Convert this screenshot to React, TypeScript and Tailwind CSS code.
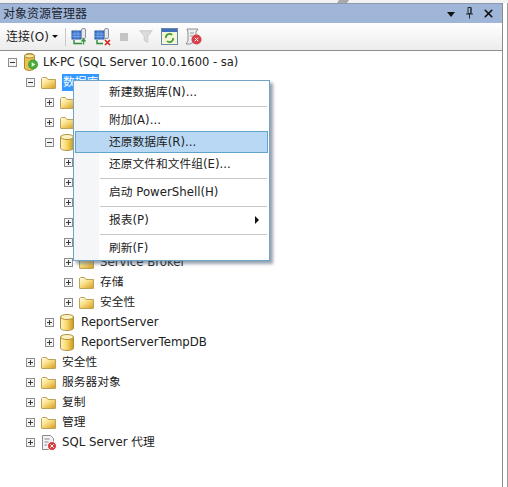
import { X } from "lucide-react";

const FONT = "font-['DejaVu_Sans','Noto_Sans_CJK_SC',sans-serif]";

function Expander({ open }: { open?: boolean }) {
  return (
    <svg width="9" height="9" viewBox="0 0 9 9" className="shrink-0">
      <rect x="0.5" y="0.5" width="8" height="8" fill="#f4f4f4" stroke="#8d8d8d" />
      <path d={open ? "M2 4.5h5" : "M2 4.5h5M4.5 2v5"} stroke="#3a3a3a" />
    </svg>
  );
}

function Folder() {
  return (
    <svg width="15" height="13" viewBox="0 0 15 13" className="shrink-0">
      <defs>
        <linearGradient id="fold" x1="0" y1="0" x2="0.8" y2="1">
          <stop offset="0" stopColor="#fffdf0" />
          <stop offset="0.45" stopColor="#fbe48e" />
          <stop offset="1" stopColor="#dca52e" />
        </linearGradient>
      </defs>
      <path d="M0.5 2.5V12a.5.5 0 0 0 .5.5h13a.5.5 0 0 0 .5-.5V3.5H7L5.5 1.5H1.5z" fill="url(#fold)" stroke="#bda257" />
    </svg>
  );
}

function Db() {
  return (
    <svg width="14" height="17" viewBox="0 0 14 17" className="shrink-0">
      <defs>
        <linearGradient id="dbg" x1="0" y1="0" x2="1" y2="0">
          <stop offset="0" stopColor="#fff6c8" />
          <stop offset="0.5" stopColor="#f8d668" />
          <stop offset="1" stopColor="#c8981f" />
        </linearGradient>
      </defs>
      <path d="M0.5 3v11c0 1.4 2.9 2.5 6.5 2.5s6.5-1.1 6.5-2.5V3z" fill="url(#dbg)" stroke="#b08e3a" />
      <ellipse cx="7" cy="3" rx="6.5" ry="2.5" fill="#fdf3c0" stroke="#b08e3a" />
    </svg>
  );
}

function ServerIcon() {
  return (
    <svg width="16" height="18" viewBox="0 0 16 18" className="shrink-0">
      <path d="M1.5 3c0-1.4 2.4-2.5 5-2.5s5 1.1 5 2.5v12c0 1.4-2.4 2.5-5 2.5s-5-1.1-5-2.5z" fill="#eac04f" stroke="#a98a35" />
      <ellipse cx="6.5" cy="3" rx="5" ry="2" fill="#f8e7a0" stroke="#a98a35" />
      <circle cx="10" cy="11.5" r="5" fill="#48a83c" />
      <path d="M8.7 9l3.6 2.5-3.6 2.5z" fill="#e6f7d8" />
    </svg>
  );
}

function AgentIcon() {
  return (
    <svg width="16" height="17" viewBox="0 0 16 17" className="shrink-0">
      <path d="M1.5 1.5h8l3 3v11h-11z" fill="#f3f3f3" stroke="#8a8a8a" />
      <path d="M3.5 5h5M3.5 8h4M3.5 11h3" stroke="#7c8aa0" />
      <circle cx="11" cy="12" r="4.5" fill="#d93a3a" stroke="#fff" />
      <path d="M9.3 10.3l3.4 3.4M12.7 10.3l-3.4 3.4" stroke="#fff" />
    </svg>
  );
}

function PinIcon() {
  return (
    <svg width="9" height="13" viewBox="0 0 9 13" className="shrink-0 -mt-[2px]">
      <path d="M3 1.5h3v6H3zM6 1.5v6M1 8h7M4.5 8v4.5" fill="none" stroke="#23272e" />
    </svg>
  );
}

type Row = { exp: number; open?: boolean; icon: "folder" | "db" | "server" | "agent"; text?: string; gap?: string; selected?: boolean };

const rows: Row[] = [
  { exp: 8, open: true, icon: "server", text: "LK-PC (SQL Server 10.0.1600 - sa)", gap: "ml-[4px] text-[11.5px]" },
  { exp: 26, open: true, icon: "folder", text: "数据库", selected: true },
  { exp: 45, icon: "folder" },
  { exp: 45, icon: "folder" },
  { exp: 45, open: true, icon: "db" },
  { exp: 64, icon: "folder" },
  { exp: 64, icon: "folder" },
  { exp: 64, icon: "folder" },
  { exp: 64, icon: "folder" },
  { exp: 64, icon: "folder" },
  { exp: 64, icon: "folder", text: "Service Broker" },
  { exp: 64, icon: "folder", text: "存储" },
  { exp: 64, icon: "folder", text: "安全性" },
  { exp: 45, icon: "db", text: "ReportServer" },
  { exp: 45, icon: "db", text: "ReportServerTempDB" },
  { exp: 26, icon: "folder", text: "安全性" },
  { exp: 26, icon: "folder", text: "服务器对象" },
  { exp: 26, icon: "folder", text: "复制" },
  { exp: 26, icon: "folder", text: "管理" },
  { exp: 26, icon: "agent", text: "SQL Server 代理" },
];

function Icon({ kind }: { kind: Row["icon"] }) {
  if (kind === "folder") return <Folder />;
  if (kind === "db") return <Db />;
  if (kind === "server") return <ServerIcon />;
  return <AgentIcon />;
}

function Computer() {
  return (
    <>
      <rect x="1" y="3" width="9" height="8" fill="#3d7bd6" stroke="#2a5aa0" />
      <path d="M1 6h9M1 8.5h9M4 3v8M7 3v8" stroke="#8db4ea" strokeWidth="0.6" />
      <rect x="10.5" y="0.5" width="4" height="10" rx="1.5" fill="#e6e8ee" stroke="#8a94a4" />
    </>
  );
}

function ToolbarIcons() {
  return (
    <div className="flex items-center ml-[5px]">
      <svg width="18" height="18" viewBox="0 0 18 18">
        <Computer />
        <path d="M3 12v3.5h8" fill="none" stroke="#2f8a34" strokeWidth="1.4" />
        <path d="M12.5 16.5v-5M10.5 13.5l2-2.5 2 2.5" fill="none" stroke="#2f9e3a" strokeWidth="1.4" />
      </svg>
      <svg width="18" height="18" viewBox="0 0 18 18" className="ml-[5px]">
        <Computer />
        <path d="M3 12v3.5h6" fill="none" stroke="#2f8a34" strokeWidth="1.4" />
        <path d="M11 12l5 5M16 12l-5 5" stroke="#d8201c" strokeWidth="1.6" />
      </svg>
      <div className="w-[8px] h-[8px] bg-[#c4c4c4] ml-[8px]" />
      <svg width="16" height="16" viewBox="0 0 18 16" className="ml-[10px]">
        <path d="M2 1h14l-5 6v7l-4-2V7z" fill="#dcdcdc" stroke="#c6c6c6" />
      </svg>
      <svg width="17" height="17" viewBox="0 0 17 17" className="ml-[7px]">
        <rect x="0.5" y="0.5" width="16" height="16" fill="#f4f6d8" stroke="#6c86a8" />
        <rect x="1" y="1" width="15" height="3" fill="#3f6fb8" />
        <path d="M5 10a3.5 3.5 0 0 1 6-3M12 10a3.5 3.5 0 0 1-6 3" fill="none" stroke="#3d9a2e" strokeWidth="1.7" />
      </svg>
      <svg width="19" height="18" viewBox="0 0 19 18" className="ml-[6px]">
        <path d="M3 1h11l-2 3v9l-6 3H2l2-3V4z" fill="#eceff2" stroke="#8e8e8e" />
        <path d="M6 5h4M6 8h3" stroke="#9a9a9a" />
        <circle cx="12.5" cy="11.5" r="5" fill="#d8404a" />
        <path d="M10.8 9.8l3.4 3.4M14.2 9.8l-3.4 3.4" stroke="#fff" />
      </svg>
    </div>
  );
}

type Item = { label: string; active?: boolean; arrow?: boolean } | "sep";

const menu: Item[] = [
  { label: "新建数据库(N)..." },
  "sep",
  { label: "附加(A)..." },
  { label: "还原数据库(R)...", active: true },
  { label: "还原文件和文件组(E)..." },
  "sep",
  { label: "启动 PowerShell(H)" },
  "sep",
  { label: "报表(P)", arrow: true },
  "sep",
  { label: "刷新(F)" },
];

function ContextMenu() {
  return (
    <div className="absolute left-[73px] top-[80px] w-[197px] h-[181px] bg-white border border-[#6fa3c8] shadow-[3px_3px_3px_rgba(70,90,110,0.55)] pr-[1px] text-[11.75px] text-[#222]">
      <div className="absolute left-0 top-0 bottom-0 w-[25px] bg-[#f5f6f7]" />
      <div className="relative flex flex-col">
        {menu.map((m, i) =>
          m === "sep" ? (
            <div key={i} className="h-[6px] flex items-center pl-[26px] pr-[1px]">
              <div className="h-px w-full bg-[#c6c6c6]" />
            </div>
          ) : (
            <div
              key={i}
              className={`flex items-center justify-between h-[22px] pr-[9px] ml-[1px] ${m.active ? "bg-[#b8d8f4] border border-[#62a3cb] pl-[33px]" : "pl-[34px]"}`}
            >
              <span className="pt-[2px]">{m.label}</span>
              {m.arrow && <div className="border-y-[4px] border-y-transparent border-l-[4px] border-l-[#111]" />}
            </div>
          )
        )}
      </div>
    </div>
  );
}

export default function App() {
  return (
    <div className={`relative w-[508px] h-[487px] bg-white overflow-hidden flex flex-col ${FONT}`}>
      <div className="h-[3px] bg-[#f2f2f2] flex shrink-0">
        <div className="ml-[338px] w-[10px] h-[3px] bg-[#a8a8a8] -skew-x-[30deg]" />
      </div>
      <div className="flex flex-1">
        <div className="w-[503px] border-r border-[#8c8c8c] flex flex-col">
          <div className="h-[20px] bg-[#9fb6d8] flex items-center pl-[3px] pr-[7px] text-[12px] text-[#1c2430] border-t border-[#8c9bb0]">
            <span className="flex-1">对象资源管理器</span>
            <div className="border-x-[4px] border-x-transparent border-t-[5px] border-t-[#111] mr-[10px] mt-[2px]" />
            <PinIcon />
            <X size={13} strokeWidth={3} className="text-[#111] ml-[8px]" />
          </div>
          <div className="h-[28px] bg-gradient-to-b from-white to-[#ececec] border-b border-[#8f8f8f] flex items-center pl-[6px] text-[12px] text-[#222]">
            <span>连接(O)</span>
            <div className="border-x-[3px] border-x-transparent border-t-[3px] border-t-[#111] ml-[3px]" />
            <div className="w-px h-[18px] bg-[#c8c8c8] ml-[7px]" />
            <ToolbarIcons />
          </div>
          <div className="flex flex-col pt-[1px] text-[11.75px] text-[#222]">
            {rows.map((r, i) => (
              <div key={i} className="h-[20px] flex items-center" style={{ paddingLeft: r.exp }}>
                <Expander open={r.open} />
                <div className="ml-[6px] flex items-center w-[16px]">
                  <Icon kind={r.icon} />
                </div>
                {r.text && (
                  <span className={`${r.gap ?? "ml-[5px]"} ${r.selected ? "bg-[#3399ff] text-white px-[1px] h-[17px] leading-[17px]" : "pt-[2px]"} whitespace-nowrap`}>
                    {r.text}
                  </span>
                )}
              </div>
            ))}
          </div>
        </div>
        <div className="w-px bg-[#9a9a9a] ml-[4px]" />
      </div>
      <ContextMenu />
    </div>
  );
}
